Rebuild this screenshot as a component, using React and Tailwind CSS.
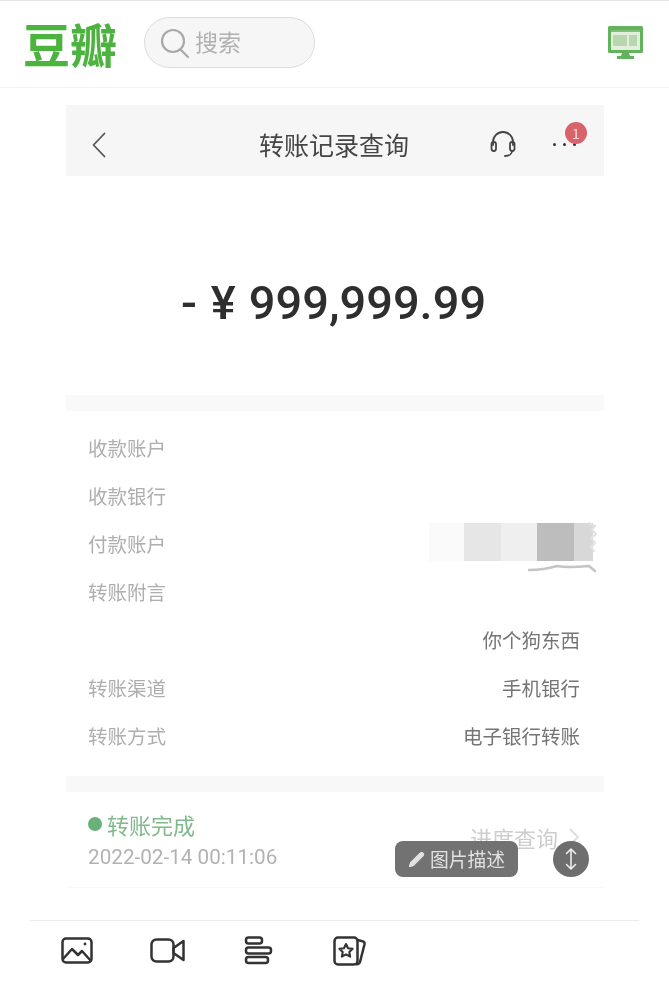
import { Pencil } from 'lucide-react'

const cjk = "font-['Noto_Sans_CJK_SC','Liberation_Sans',sans-serif]"

const rows = [
  { label: '收款账户' },
  { label: '收款银行' },
  { label: '付款账户', masked: true },
  { label: '转账附言' },
  { label: '', value: '你个狗东西' },
  { label: '转账渠道', value: '手机银行' },
  { label: '转账方式', value: '电子银行转账' },
]

function SearchIcon() {
  return (
    <svg width="30" height="32" viewBox="0 0 30 32" fill="none" stroke="#a8a8a8" strokeWidth="2.2" strokeLinecap="round">
      <circle cx="13" cy="14" r="11" />
      <path d="M21 23l7 7" />
    </svg>
  )
}

function DesktopIcon() {
  return (
    <svg width="35" height="33" viewBox="0 0 35 33">
      <rect x="0" y="0" width="35" height="27" rx="1.5" fill="#62b35c" />
      <rect x="3" y="4" width="29" height="20" fill="#e3efdd" />
      <rect x="3" y="4" width="29" height="2" fill="#7fbf78" />
      <rect x="5" y="9" width="14" height="11" fill="#b8d6b0" />
      <rect x="21" y="9" width="8" height="11" fill="#b8d6b0" />
      <path d="M14 27h7l1 3h4v3H9v-3h4z" fill="#62b35c" />
    </svg>
  )
}

function Headset() {
  return (
    <svg width="26" height="27" viewBox="0 0 26 27" fill="none" stroke="#444" strokeWidth="1.8" strokeLinecap="round">
      <path d="M3 14V11a10 10 0 0 1 20 0v3" />
      <rect x="1.5" y="11" width="4.5" height="9" rx="2.2" />
      <rect x="20" y="11" width="4.5" height="9" rx="2.2" />
      <path d="M22 20c0 3-3 5-7 5" />
    </svg>
  )
}

function ToolImage() {
  return (
    <svg width="32" height="27" viewBox="0 0 32 27" fill="none" stroke="#333" strokeWidth="2.5" strokeLinejoin="round">
      <rect x="1.5" y="1.5" width="29" height="24" rx="3.5" />
      <path d="M2 22l9-10 6 6 4-4 9 10" />
      <circle cx="24" cy="7" r="1.4" fill="#333" stroke="none" />
    </svg>
  )
}

function ToolVideo() {
  return (
    <svg width="35" height="25" viewBox="0 0 35 25" fill="none" stroke="#333" strokeWidth="2.5" strokeLinejoin="round">
      <rect x="1.5" y="1.5" width="22" height="22" rx="5" />
      <path d="M23.5 10l10-7v19l-10-7z" />
    </svg>
  )
}

function ToolAlign() {
  return (
    <svg width="29" height="29" viewBox="0 0 29 29" fill="none" stroke="#333" strokeWidth="2.5">
      <rect x="2" y="1.5" width="16" height="6" rx="2.5" />
      <rect x="2" y="11.5" width="25" height="6" rx="2.5" />
      <rect x="2" y="21" width="22" height="6" rx="2.5" />
    </svg>
  )
}

function ToolCards() {
  return (
    <svg width="33" height="30" viewBox="0 0 33 30" fill="none" stroke="#333" strokeWidth="2.5" strokeLinejoin="round">
      <rect x="1.5" y="1.5" width="23" height="27" rx="3.5" />
      <path d="M24.5 4l5 1.2a2.5 2.5 0 0 1 2 3L27 26a3 3 0 0 1-4 2" />
      <path d="M13 8l2 4.2 4.6.6-3.3 3.2.8 4.6-4.100-2.200-4.100 2.200.8-4.600-3.300-3.200 4.600-.6z" strokeWidth="2.1" />
    </svg>
  )
}

// smudged bottom/right edge of the masked account number
function Smudge() {
  return (
    <svg className="absolute -bottom-[14px] right-0" width="70" height="54" viewBox="0 0 70 54" fill="none" stroke="#c4c4c4" strokeLinecap="round">
      <path d="M2 49c10 0 18-1 28-4 10 2 22 1 32 0l6 5" strokeWidth="2.500" />
      <path d="M62 2l6 3-3 4 4 4-5 4 4 5-4 4 3 4" strokeWidth="2" stroke="#e2e2e2" />
    </svg>
  )
}

export default function App() {
  return (
    <div className={`relative h-[1000px] w-[669px] overflow-hidden bg-white blur-[0.5px] ${cjk}`}>
      <header className="flex h-[88px] items-center justify-between border-y border-t-[#e4e4e4] border-b-[#f4f4f4] pb-[3px] pl-[23px] pr-[26px]">
        <div className="flex items-center">
          <div className="w-[94px] text-[47px] font-bold leading-none text-[#4cb43e]">豆瓣</div>
          <div className="ml-[27px] flex h-[51px] w-[171px] items-center gap-[5px] rounded-full border border-[#dcdcdc] bg-[#f6f6f6] pl-[15px]">
            <SearchIcon />
            <span className="pb-[3px] text-[23px] text-[#b0b0b0]">搜索</span>
          </div>
        </div>
        <DesktopIcon />
      </header>

      <main className="mx-[66px] w-[538px] pt-[17px]">
        <div className="grid h-[71px] grid-cols-[1fr_auto_1fr] items-center bg-[#f6f6f6] pl-[26px] pr-[28px] pt-[8px]">
          <svg width="14" height="26" viewBox="0 0 14 26" fill="none" stroke="#555" strokeWidth="1.8" strokeLinecap="round" strokeLinejoin="round">
            <path d="M12.500 1.500L1.500 13l11 11.500" />
          </svg>
          <div className="text-[25px] leading-none text-[#454545]">转账记录查询</div>
          <div className="flex items-center justify-end gap-[37px]">
            <Headset />
            <div className="relative flex gap-[7px]">
              <span className="size-[3px] rounded-full bg-[#333]" />
              <span className="size-[3px] rounded-full bg-[#333]" />
              <span className="size-[3px] rounded-full bg-[#333]" />
              <span className="absolute -right-[11px] -top-[21px] flex size-[22px] items-center justify-center rounded-full bg-[#d9636b] text-[14px] leading-none text-[#f6d9da]">1</span>
            </div>
          </div>
        </div>

        <div className="flex h-[219px] items-center justify-center pr-[3px] pt-[33px] text-[47px] font-medium leading-none text-[#2e2e2e] font-['Roboto','Noto_Sans_CJK_SC',sans-serif]">
          <span className="mr-[14px]">-</span>
          <span className="mr-[13px]">¥</span>
          <span>999,999.99</span>
        </div>

        <div className="h-[16px] bg-[#f9f9f9]" />

        <div className="pt-[13px]">
          {rows.map((row, i) => (
            <div key={i} className="flex h-[48px] items-center justify-between pl-[22px] pr-[24px] text-[19.500px] leading-none">
              <span className="text-[#aeaeae]">{row.label}</span>
              {row.value && <span className="text-[#757575]">{row.value}</span>}
              {row.masked && (
                <div className="relative -mr-[17px] -mt-[4px] flex h-[38px] w-[168px]">
                  <div className="w-[35px] bg-[#fafafa]" />
                  <div className="w-[37px] bg-[#e6e6e6]" />
                  <div className="w-[36px] bg-[#efefef]" />
                  <div className="w-[37px] bg-[#bdbdbd]" />
                  <div className="w-[19px] bg-[#d8d8d8]" />
                  <Smudge />
                </div>
              )}
            </div>
          ))}
        </div>

        <div className="mt-[16px] h-[16px] bg-[#f8f8f8]" />

        <div className="flex h-[96px] items-start justify-between border-b border-[#f8f8f8] pl-[22px] pr-[24px] pt-[19px]">
          <div>
            <div className="flex items-center gap-[5px] text-[22px] leading-[26px] text-[#80b98c]">
              <span className="size-[14px] rounded-full bg-[#69b07a]" />
              转账完成
            </div>
            <div className="mt-[8px] text-[20.700px] leading-[24px] text-[#b2b2b2] font-['Roboto',sans-serif]">2022-02-14 00:11:06</div>
          </div>
          <div className="mt-[13px] flex items-center gap-[10px] text-[22px] leading-[26px] text-[#cdcdcd]">
            进度查询
            <svg width="12" height="20" viewBox="0 0 12 20" fill="none" stroke="#dcdcdc" strokeWidth="1.800">
              <path d="M2 2l8 8-8 8" />
            </svg>
          </div>
        </div>
      </main>

      <div className="mx-[30px] mt-[32px] flex h-[60px] items-center border-t border-[#ececec] pl-[31px]">
        <div className="w-[89px]"><ToolImage /></div>
        <div className="w-[94px]"><ToolVideo /></div>
        <div className="w-[89px]"><ToolAlign /></div>
        <ToolCards />
      </div>

      {/* floating buttons */}
      <div className="absolute left-[395px] top-[841px] flex h-[36px] w-[123px] items-center gap-[5px] rounded-[8px] bg-[#727272] pl-[13px] text-[18.800px] leading-none text-[#e2e2e2]">
        <Pencil size={17} fill="#e2e2e2" strokeWidth={1.500} />
        图片描述
      </div>
      <div className="absolute left-[553px] top-[841px] flex size-[36px] items-center justify-center rounded-full bg-[#6e6e6e]">
        <svg width="12" height="24" viewBox="0 0 12 24" fill="none" stroke="#eee" strokeWidth="1.600" strokeLinecap="round" strokeLinejoin="round">
          <path d="M6 2v20M1.500 6.500L6 2l4.500 4.500M1.500 17.500L6 22l4.500-4.500" />
        </svg>
      </div>
    </div>
  )
}
